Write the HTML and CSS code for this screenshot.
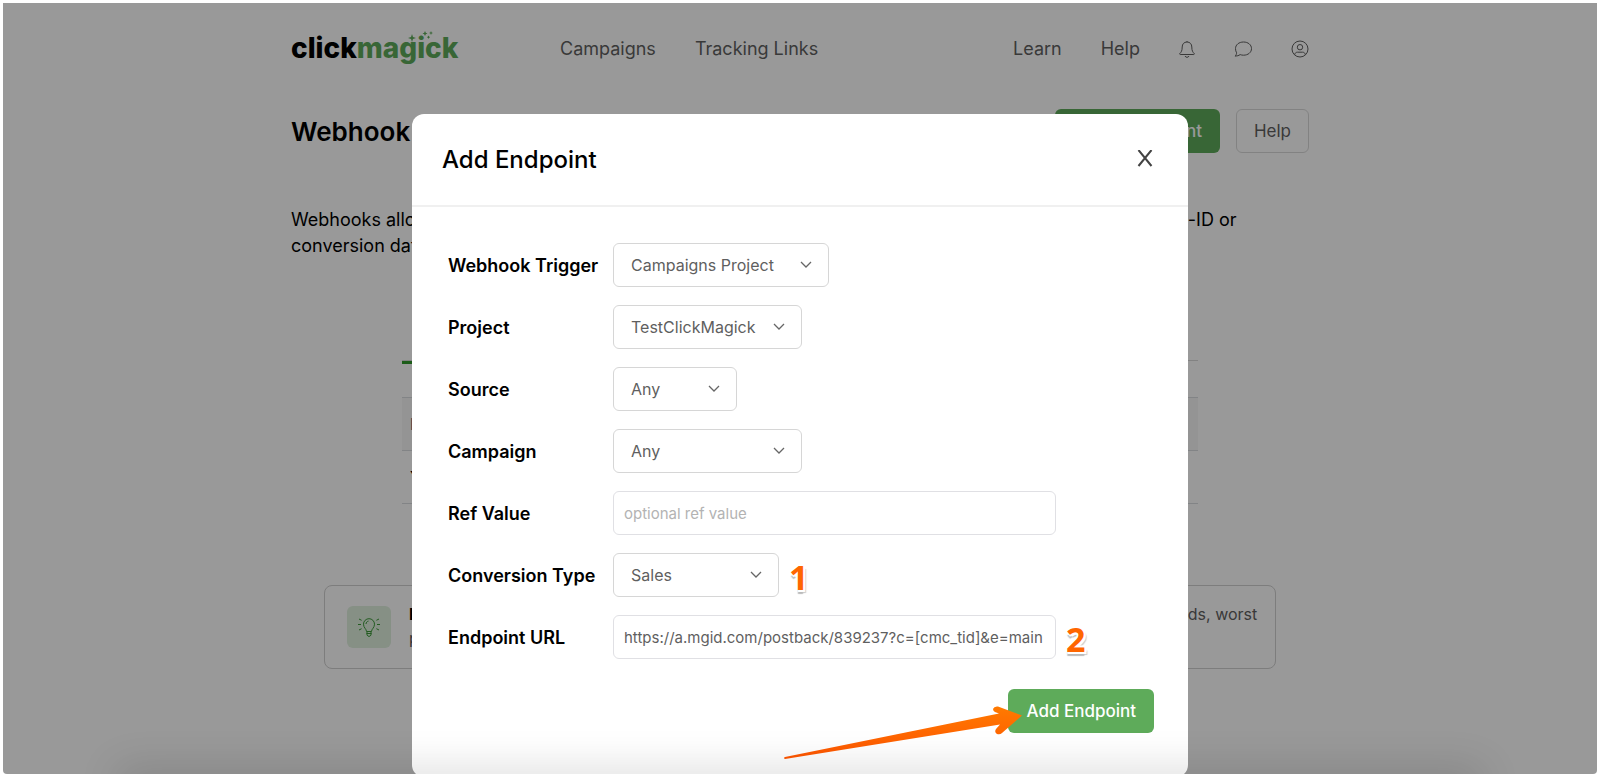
FILE: index.html
```html
<!DOCTYPE html>
<html lang="en">
<head>
    <meta charset="UTF-8">
    <meta name="viewport" content="width=device-width, initial-scale=1.0">
    <title>Webhooks - ClickMagick</title>
    <link rel="stylesheet" href="styles.css">
</head>
<body>
    <div class="window">
        <div class="page">
            <header class="topbar">
                <a class="logo" href="#">click<span>magick</span>
                    <svg class="sparkles" width="26" height="12" viewBox="0 0 26 12" fill="currentColor">
                        <path d="M4 3l1 3 3 1-3 1-1 3-1-3-3-1 3-1z"/>
                        <path d="M17 0l.8 1.7 1.7.8-1.7.8-.8 1.7-.8-1.7-1.7-.8 1.7-.8z"/>
                        <path d="M23 0l.6 1.4 1.4.6-1.4.6L23 4l-.6-1.4L21 2l1.4-.6z"/>
                        <path d="M20.500 4.500l.6 1.100 1.100.6-1.100.6-.6 1.100-.6-1.100-1.100-.6 1.100-.6z"/>
                    </svg>
                </a>
                <nav class="nav-main">
                    <a href="#">Campaigns</a>
                    <a href="#">Tracking Links</a>
                </nav>
                <nav class="nav-side">
                    <a href="#">Learn</a>
                    <a href="#">Help</a>
                    <a class="icon" href="#" aria-label="Notifications">
                        <svg width="16" height="18" viewBox="0 0 16 18" fill="none" stroke="currentColor">
                            <path d="M8 1v1M8 2c-3 0-4.800 2.100-4.800 5 0 3.800-1 5.200-2.400 6.500-.3.4-.1 1 .4 1h13.600c.5 0 .7-.6.4-1-1.400-1.300-2.400-2.700-2.400-6.500C12.800 4.100 11 2 8 2z"/>
                            <path d="M6 16c.4.9 1.100 1.300 2 1.300s1.600-.4 2-1.300"/>
                        </svg>
                    </a>
                    <a class="icon" href="#" aria-label="Messages">
                        <svg width="18" height="18" viewBox="0 0 18 18" fill="none" stroke="currentColor">
                            <path d="M9.500 2c4.600 0 8 2.800 8 6.600s-3.400 6.600-8 6.600c-1.200 0-2.300-.2-3.300-.6-1.300 1-3 1.500-5.200 1.500 1-.9 1.600-2 1.600-3.300C1.900 11.600 1.500 10.200 1.500 8.600 1.500 4.800 4.900 2 9.500 2z"/>
                        </svg>
                    </a>
                    <a class="icon" href="#" aria-label="Account">
                        <svg width="18" height="18" viewBox="0 0 18 18" fill="none" stroke="currentColor">
                            <circle cx="9" cy="9" r="8"/>
                            <circle cx="9" cy="7.200" r="2.700"/>
                            <path d="M3.600 14.800c.3-1.700 1.300-2.600 2.800-2.600h5.200c1.500 0 2.500.9 2.800 2.600"/>
                        </svg>
                    </a>
                </nav>
            </header>

            <div class="page-head">
                <h1>Webhook Endpoints</h1>
                <button class="btn btn-green" type="button">Add Endpoint</button>
                <button class="btn btn-outline" type="button">Help</button>
            </div>

            <p class="intro">Webhooks allow you to notify another website or app about new conversions and send along either a Sub-ID or conversion data in real time.</p>

            <div class="list">
                <div class="tabs"><div class="tab-active"></div></div>
                <table class="endpoints">
                    <thead>
                        <tr><th>Endpoint</th></tr>
                    </thead>
                    <tbody>
                        <tr><td>You have no endpoints yet.</td></tr>
                    </tbody>
                </table>
            </div>

            <div class="tip">
                <div class="tip-icon">
                    <svg width="24" height="20" viewBox="0 0 24 20" fill="none" stroke="currentColor">
                        <path d="M9.500 14.500c0-2.500-3-3.700-3-7.300a5.500 5.500 0 0 1 11 0c0 3.600-3 4.800-3 7.300zM9.500 16.500h5M10 14.500v3.500l1 1.200h2l1-1.200v-3.500M9 7c.1-1.500 1-2.600 2.500-2.900"/>
                        <path d="M1 7.500h3M20 7.500h3M2 2l2.600 1.300M22 2l-2.600 1.300M2 13l2.600-1.300M22 13l-2.600-1.300"/>
                    </svg>
                </div>
                <p><b>Did you know?</b> The Click Magick Daily Report shows you a handy and quick summary of your best trends, worst performers and more.</p>
            </div>
        </div>

        <div class="overlay">
            <div class="modal" role="dialog" aria-labelledby="modalTitle">
                <div class="modal-head">
                    <h2 id="modalTitle">Add Endpoint</h2>
                    <button class="close" type="button" aria-label="Close">
                        <svg width="16" height="20" viewBox="0 0 16 20" fill="none" stroke="currentColor" stroke-width="2">
                            <path d="M1.500 0l13 16M14.500 0l-13 16"/>
                        </svg>
                    </button>
                </div>
                <form class="modal-body">
                    <div class="row">
                        <label for="trigger">Webhook Trigger</label>
                        <select id="trigger" class="select-lg"><option>Campaigns Project</option></select>
                    </div>
                    <div class="row">
                        <label for="project">Project</label>
                        <select id="project" class="select-md"><option>TestClickMagick</option></select>
                    </div>
                    <div class="row">
                        <label for="source">Source</label>
                        <select id="source" class="select-xs"><option>Any</option></select>
                    </div>
                    <div class="row">
                        <label for="campaign">Campaign</label>
                        <select id="campaign" class="select-md"><option>Any</option></select>
                    </div>
                    <div class="row">
                        <label for="ref">Ref Value</label>
                        <input id="ref" type="text" placeholder="optional ref value">
                    </div>
                    <div class="row">
                        <label for="conversion">Conversion Type</label>
                        <select id="conversion" class="select-sm"><option>Sales</option></select>
                        <span class="step">1</span>
                    </div>
                    <div class="row">
                        <label for="url">Endpoint URL</label>
                        <input id="url" type="text" value="https://a.mgid.com/postback/839237?c=[cmc_tid]&amp;e=main">
                        <span class="step">2</span>
                    </div>
                    <div class="actions">
                        <button class="btn btn-green" type="submit">Add Endpoint</button>
                        <svg class="arrow" width="240" height="56" viewBox="0 0 240 56">
                            <defs>
                                <linearGradient id="arrowFill" x1="0" y1="0" x2="0" y2="1">
                                    <stop offset="0" stop-color="#ff7a00"/>
                                    <stop offset="1" stop-color="#ff5500"/>
                                </linearGradient>
                            </defs>
                            <path fill="url(#arrowFill)" d="M3 51Q1 52 3 53L218 18.500L214 23Q212 26 215 28Q218 29 220 27L240 9.500L216 .5Q212 0 211 3Q211 5 213 6L217 7.500Z"/>
                        </svg>
                    </div>
                </form>
            </div>
        </div>
        <div class="dock-shadow"></div>
    </div>
</body>
</html>
```
FILE: styles.css
```css
* {
    box-sizing: border-box;
}

body {
    margin: 0;
    padding: 3px;
    height: 100vh;
    overflow: hidden;
    background: #fff;
    font-family: Inter, "Liberation Sans", sans-serif;
    font-size: 18px;
    color: #000;
}

a {
    color: inherit;
    text-decoration: none;
}

h1, h2, p {
    margin: 0;
}

button, input, select {
    font-family: inherit;
}

.window {
    position: relative;
    height: 100%;
    overflow: hidden;
    border-radius: 0 0 4px 4px;
    background: #fff;
}

.page {
    max-width: 1018px;
    margin: 0 auto;
}

/* Top navigation */
.topbar {
    display: flex;
    align-items: center;
    height: 90px;
    color: #5f5f5f;
}

.logo {
    position: relative;
    width: 269px;
    font-size: 28px;
    font-weight: 800;
    color: #000;
}

.logo span,
.sparkles {
    color: #5eab5a;
}

.sparkles {
    position: absolute;
    left: 117px;
    top: 0;
}

.nav-main,
.nav-side {
    display: flex;
    align-items: center;
    gap: 39px;
}

.nav-side {
    margin-left: auto;
}

.icon {
    display: flex;
    padding-top: 2px;
}

/* Title and actions */
.page-head {
    display: flex;
    align-items: center;
    gap: 16px;
    margin-top: 16px;
}

h1 {
    margin-right: auto;
    font-size: 26px;
    font-weight: 600;
}

.btn {
    height: 44px;
    padding: 0 17px;
    border: 1px solid transparent;
    border-radius: 6px;
    font-size: 17px;
    white-space: nowrap;
    cursor: pointer;
}

.btn-green {
    background: #5eab5a;
    color: #fff;
    font-weight: 500;
}

.page-head .btn-green {
    width: 165px;
    text-align: right;
}

.btn-outline {
    background: #fff;
    border-color: #d9d9d9;
    color: #5f5f5f;
}

.intro {
    max-width: 960px;
    margin-top: 54px;
    line-height: 26px;
}

/* Endpoint list */
.list {
    max-width: 796px;
    margin: 101px auto 0;
}

.tabs {
    height: 37px;
    border-top: 1px solid #d9d9d9;
}

.tab-active {
    width: 160px;
    height: 3px;
    background: #2f9a2a;
}

.endpoints {
    width: 100%;
    border-collapse: collapse;
    font-size: 16px;
    text-align: left;
}

.endpoints th,
.endpoints td {
    height: 53px;
    padding: 0 8px;
    border: 0 solid #d9dde0;
    border-width: 1px 0;
}

.endpoints th {
    background: #f7f7f7;
    color: #667;
    font-weight: 500;
}

/* Tip box */
.tip {
    display: flex;
    gap: 18px;
    max-width: 952px;
    margin: 81px auto 0;
    padding: 16px 12px 16px 22px;
    border: 1px solid #d0d0d0;
    border-radius: 8px;
    font-size: 16px;
    line-height: 24px;
    color: #5f5f5f;
}

.tip b {
    color: #000;
}

.tip-icon {
    display: flex;
    flex: none;
    align-items: center;
    justify-content: center;
    width: 44px;
    height: 42px;
    margin: 4px 0;
    border-radius: 6px;
    background: #dff0de;
    color: #3c9a38;
}

/* Modal */
.overlay {
    position: absolute;
    inset: 0;
    padding-top: 111px;
    background: rgba(0, 0, 0, 0.4);
}

.modal {
    max-width: 776px;
    margin: 0 auto;
    border-radius: 12px;
    background: #fff;
}

.modal-head {
    display: flex;
    align-items: center;
    justify-content: space-between;
    height: 93px;
    padding: 0 35px 0 30px;
    border-bottom: 2px solid #f0f0f0;
}

h2 {
    font-size: 24px;
    font-weight: 500;
}

.close {
    display: flex;
    padding: 0;
    border: 0;
    background: none;
    color: #444;
    cursor: pointer;
}

.modal-body {
    display: flex;
    flex-direction: column;
    gap: 18px;
    padding: 36px 34px 44px 36px;
}

.row {
    display: flex;
    align-items: center;
}

.row label {
    flex: none;
    width: 165px;
    font-weight: 600;
}

.row input,
.row select {
    height: 44px;
    border: 1px solid #d6d6d6;
    border-radius: 6px;
    background-color: #fff;
    color: #5f5f5f;
    font-size: 16px;
}

.row input {
    width: 443px;
    padding: 0 0 0 10px;
    border-color: #e0e0e4;
    font-size: 15px;
}

.row input::placeholder {
    color: #b3b3b3;
}

.row select {
    appearance: none;
    padding: 0 17px;
    background-image: url("data:image/svg+xml,%3Csvg xmlns='http://www.w3.org/2000/svg' width='12' height='8' fill='none' stroke='%23666' stroke-width='1.3'%3E%3Cpath d='M1 1l5 5 5-5'/%3E%3C/svg%3E");
    background-repeat: no-repeat;
    background-position: right 16px center;
}

.row .select-lg { width: 216px; }
.row .select-md { width: 189px; }
.row .select-sm { width: 166px; }
.row .select-xs { width: 124px; }

.step {
    height: 40px;
    margin-left: 10px;
    padding-top: 2px;
    font-family: "Open Sans", sans-serif;
    font-size: 34px;
    font-weight: 700;
    line-height: 40px;
    color: #ff6600;
    text-shadow: 2px 0 #fff, -2px 0 #fff, 0 2px #fff, 0 -2px #fff, 2px 2px #fff, 0 4px 1px #bbb, 3px 3px 1px #ccc;
}

.actions {
    position: relative;
    display: flex;
    justify-content: flex-end;
    margin-top: 12px;
}

.arrow {
    position: absolute;
    right: 132px;
    top: 17px;
}

.dock-shadow {
    position: absolute;
    left: 120px;
    right: 120px;
    bottom: -20px;
    height: 20px;
    box-shadow: 0 0 40px 6px rgba(0, 0, 0, 0.14);
    pointer-events: none;
}
```
